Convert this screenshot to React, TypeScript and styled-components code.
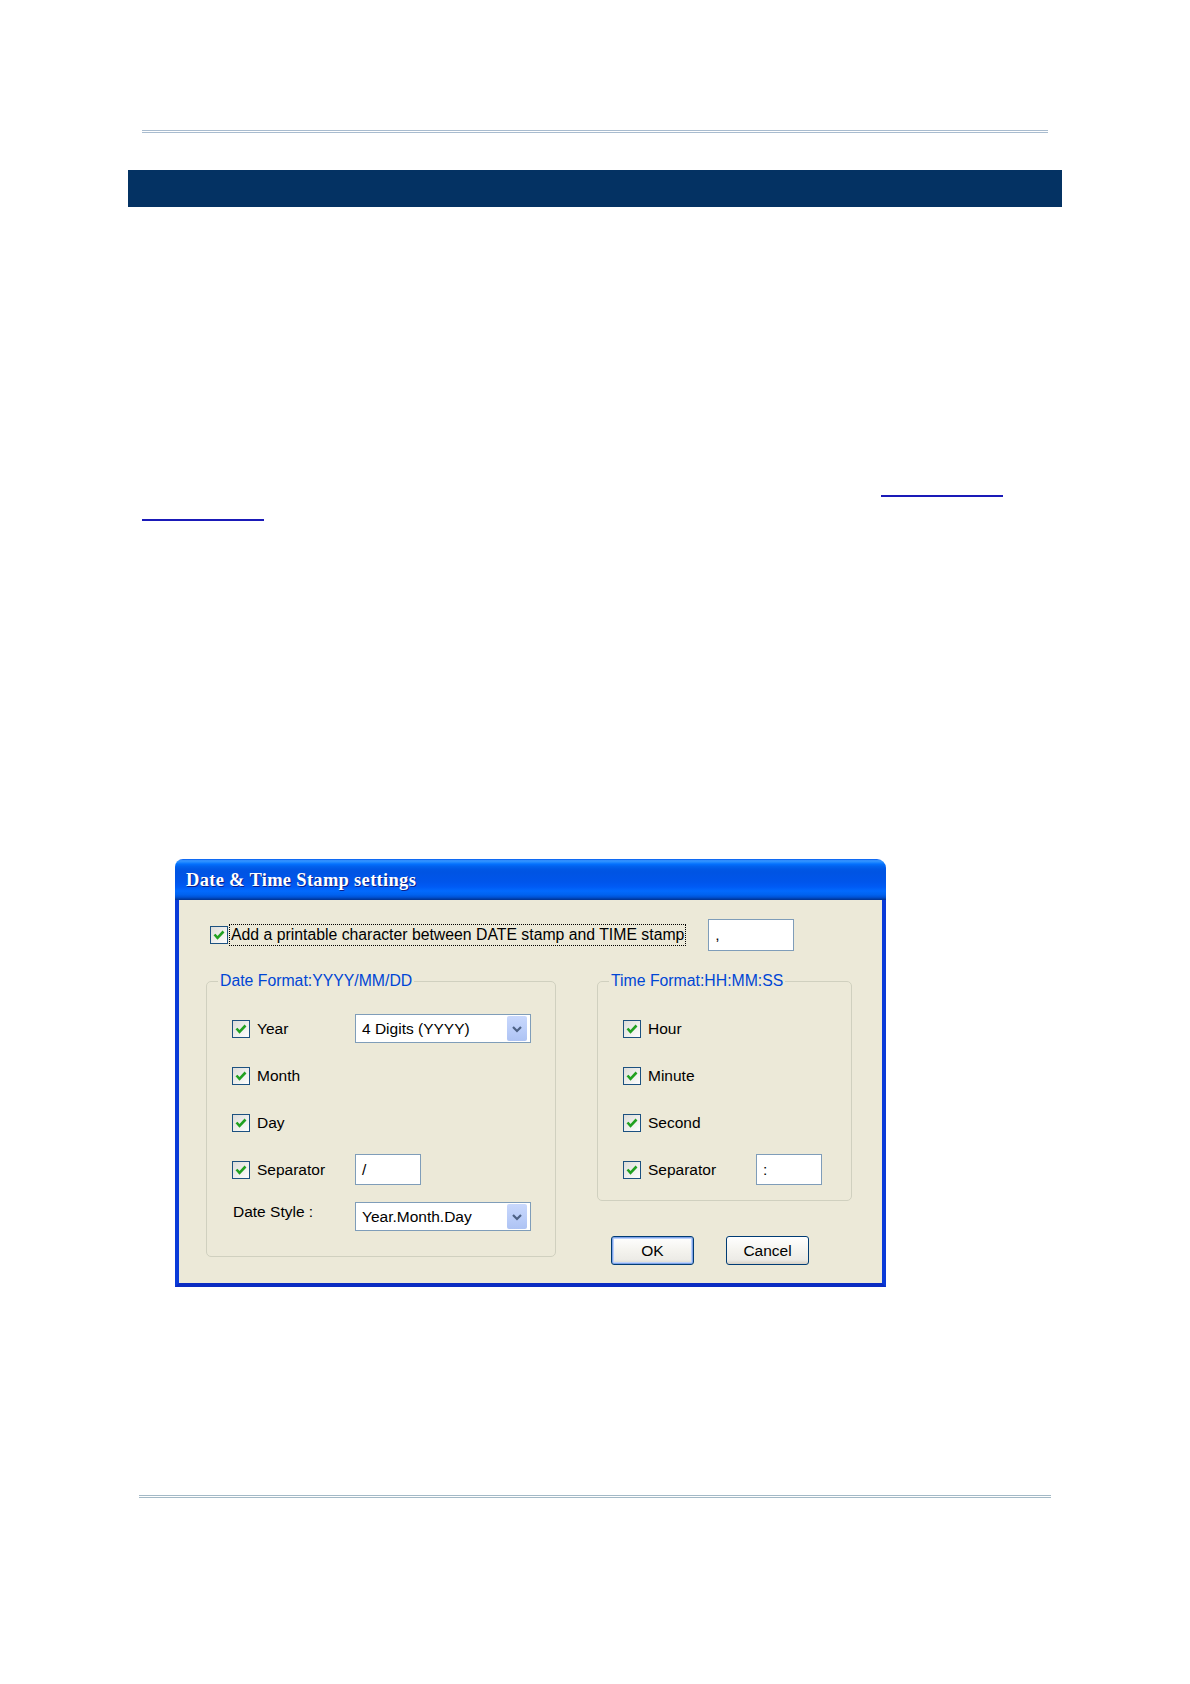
import React from "react";
import styled, { createGlobalStyle } from "styled-components";

const GlobalStyle = createGlobalStyle`
  html, body {
    margin: 0;
    padding: 0;
    background: #ffffff;
  }
  body {
    font-family: "Liberation Sans", Arial, sans-serif;
  }
`;

const Page = styled.div`
  width: 1190px;
  height: 1684px;
  padding-top: 130px;
  box-sizing: border-box;
  background: #ffffff;
  overflow: hidden;
`;

const Rule = styled.div<{ $inset: number; $color: string; $top?: number }>`
  margin: ${p => p.$top ?? 0}px ${p => p.$inset}px 0;
  height: 1px;
  border-top: 1px solid ${p => p.$color};
  border-bottom: 1px solid ${p => p.$color};
`;

const HeaderBar = styled.div`
  margin: 37px 128px 0;
  height: 37px;
  background: #043263;
`;

const Paragraph = styled.div`
  margin: 266px 142px 0;
`;

const Line = styled.div<{ $indent: number }>`
  display: flex;
  height: 24px;
  padding-left: ${p => p.$indent}px;
`;

const LinkLine = styled.span<{ $width: number }>`
  display: block;
  width: ${p => p.$width}px;
  height: 22px;
  border-bottom: 2px solid #1a1ab8;
`;

const Dialog = styled.div`
  margin: 338px 0 0 175px;
  width: 711px;
`;

const TitleBar = styled.div`
  height: 41px;
  border-radius: 8px 9px 0 0;
  display: flex;
  align-items: center;
  padding-left: 11px;
  background: linear-gradient(
    to bottom,
    #0058ee 0%,
    #3593ff 4%,
    #288eff 7%,
    #127dff 10%,
    #036ffc 13%,
    #0262ee 18%,
    #0057e5 25%,
    #0054e3 32%,
    #0055eb 56%,
    #005bf5 68%,
    #026afe 78%,
    #0062ef 87%,
    #0052d6 93%,
    #0040ab 97%,
    #003092 100%
  );
`;

const Title = styled.span`
  font-family: "Liberation Serif", "Times New Roman", serif;
  font-weight: 700;
  font-size: 18.5px;
  letter-spacing: 0.3px;
  color: #ffffff;
  text-shadow: 1px 1px 0 #0a1f8a;
  margin-top: 2px;
`;

const Body = styled.div`
  box-sizing: border-box;
  height: 387px;
  background: #ece9d8;
  border: 4px solid #0a3ad8;
  border-top: none;
  border-bottom-color: #0a2cc2;
  padding: 19px 0 0 27px;
`;

const TopRow = styled.div`
  display: flex;
  align-items: center;
  height: 32px;
  padding-left: 4px;
  gap: 1px;
`;

const FocusLabel = styled.span`
  display: flex;
  align-items: center;
  height: 20px;
  padding: 0 1px;
  border: 1px dotted #000000;
  font-size: 15.8px;
  color: #000000;
  margin-right: 21px;
  white-space: nowrap;
`;

const Columns = styled.div`
  display: flex;
  align-items: flex-start;
  gap: 41px;
  margin-top: 21px;
`;

const RightColumn = styled.div`
  display: flex;
  flex-direction: column;
`;

const GroupBox = styled.fieldset<{ $width: number; $padBottom: number }>`
  box-sizing: border-box;
  width: ${p => p.$width}px;
  margin: 0;
  border: 1px solid #d0d0bf;
  border-radius: 5px;
  padding: 15px 0 ${p => p.$padBottom}px 25px;
  min-width: 0;
`;

const Legend = styled.legend<{ $shift: number }>`
  font-size: 15.8px;
  line-height: 18px;
  color: #0046d5;
  padding: 0 2px;
  margin-left: ${p => p.$shift}px;
`;

const Row = styled.div`
  display: flex;
  align-items: center;
  height: 47px;
`;

const LabelCell = styled.div<{ $width: number }>`
  display: flex;
  align-items: center;
  gap: 7px;
  width: ${p => p.$width}px;
  font-size: 15.5px;
  color: #000000;
  white-space: nowrap;
`;

const PlainLabel = styled.span`
  padding-left: 1px;
  margin-top: -10px;
`;

const Combo = styled.div`
  box-sizing: border-box;
  width: 176px;
  height: 29px;
  border: 1px solid #7f9db9;
  background: #ffffff;
  display: flex;
  align-items: center;
  justify-content: space-between;
  padding: 0 3px 0 6px;
  font-size: 15.5px;
  color: #000000;
`;

const DropButton = styled.div`
  width: 20px;
  height: 25px;
  border-radius: 2px;
  background: linear-gradient(to bottom, #c9d8fc 0%, #b9ccf8 60%, #aec3f3 100%);
  display: flex;
  align-items: center;
  justify-content: center;
`;

const TextBox = styled.div<{ $width: number; $height: number }>`
  box-sizing: border-box;
  width: ${p => p.$width}px;
  height: ${p => p.$height}px;
  border: 1px solid #7f9db9;
  background: #ffffff;
  display: flex;
  align-items: center;
  padding-left: 6px;
  font-size: 15.5px;
  color: #000000;
`;

const ButtonRow = styled.div`
  display: flex;
  gap: 32px;
  margin-top: 35px;
  padding-left: 14px;
`;

const Button = styled.div<{ $default?: boolean }>`
  box-sizing: border-box;
  width: 83px;
  height: 29px;
  border: 1px solid #003c74;
  border-radius: 3px;
  background: linear-gradient(to bottom, #ffffff 0%, #f4f3ee 50%, #ecebe6 85%, #d6d0c5 100%);
  display: flex;
  align-items: center;
  justify-content: center;
  font-size: 15.5px;
  color: #000000;
  box-shadow: ${p =>
    p.$default ? "inset 0 0 0 1px #7fa2e8, inset 0 0 0 2px #bcd2fa" : "none"};
`;

const CheckBox = () => (
  <svg width="18" height="18" viewBox="0 0 18 18">
    <defs>
      <linearGradient id="cbg" x1="0" y1="0" x2="1" y2="1">
        <stop offset="0" stopColor="#dcdcd7" />
        <stop offset="1" stopColor="#ffffff" />
      </linearGradient>
    </defs>
    <rect x="0.5" y="0.5" width="17" height="17" fill="url(#cbg)" stroke="#1c5180" />
    <polyline
      points="4.5,8.5 7.5,11.8 13.5,5.5"
      fill="none"
      stroke="#21a121"
      strokeWidth="2.6"
    />
  </svg>
);

const Chevron = () => (
  <svg width="12" height="10" viewBox="0 0 12 10">
    <polyline points="2,3 6,7 10,3" fill="none" stroke="#4d6185" strokeWidth="2.2" />
  </svg>
);

const CheckRow = ({ label, width, children }: { label: string; width: number; children?: React.ReactNode }) => (
  <Row>
    <LabelCell $width={width}>
      <CheckBox />
      <span>{label}</span>
    </LabelCell>
    {children}
  </Row>
);

export default function App() {
  return (
    <Page>
      <GlobalStyle />
      <Rule $inset={142} $color="#a9bccf" />
      <HeaderBar />
      <Paragraph>
        <Line $indent={739}>
          <LinkLine $width={122} />
        </Line>
        <Line $indent={0}>
          <LinkLine $width={122} />
        </Line>
      </Paragraph>

      <Dialog>
        <TitleBar>
          <Title>Date &amp; Time Stamp settings</Title>
        </TitleBar>
        <Body>
          <TopRow>
            <CheckBox />
            <FocusLabel>Add a printable character between DATE stamp and TIME stamp</FocusLabel>
            <TextBox $width={86} $height={32}>,</TextBox>
          </TopRow>
          <Columns>
            <GroupBox $width={350} $padBottom={16}>
              <Legend $shift={-14}>Date Format:YYYY/MM/DD</Legend>
              <CheckRow label="Year" width={123}>
                <Combo>
                  <span>4 Digits (YYYY)</span>
                  <DropButton>
                    <Chevron />
                  </DropButton>
                </Combo>
              </CheckRow>
              <CheckRow label="Month" width={123} />
              <CheckRow label="Day" width={123} />
              <CheckRow label="Separator" width={123}>
                <TextBox $width={66} $height={31}>/</TextBox>
              </CheckRow>
              <Row>
                <LabelCell $width={123}>
                  <PlainLabel>Date Style :</PlainLabel>
                </LabelCell>
                <Combo>
                  <span>Year.Month.Day</span>
                  <DropButton>
                    <Chevron />
                  </DropButton>
                </Combo>
              </Row>
            </GroupBox>
            <RightColumn>
              <GroupBox $width={255} $padBottom={7}>
                <Legend $shift={-14}>Time Format:HH:MM:SS</Legend>
                <CheckRow label="Hour" width={133} />
                <CheckRow label="Minute" width={133} />
                <CheckRow label="Second" width={133} />
                <CheckRow label="Separator" width={133}>
                  <TextBox $width={66} $height={31}>:</TextBox>
                </CheckRow>
              </GroupBox>
              <ButtonRow>
                <Button $default>OK</Button>
                <Button>Cancel</Button>
              </ButtonRow>
            </RightColumn>
          </Columns>
        </Body>
      </Dialog>

      <Rule $inset={139} $color="#a3b9c6" $top={208} />
    </Page>
  );
}
